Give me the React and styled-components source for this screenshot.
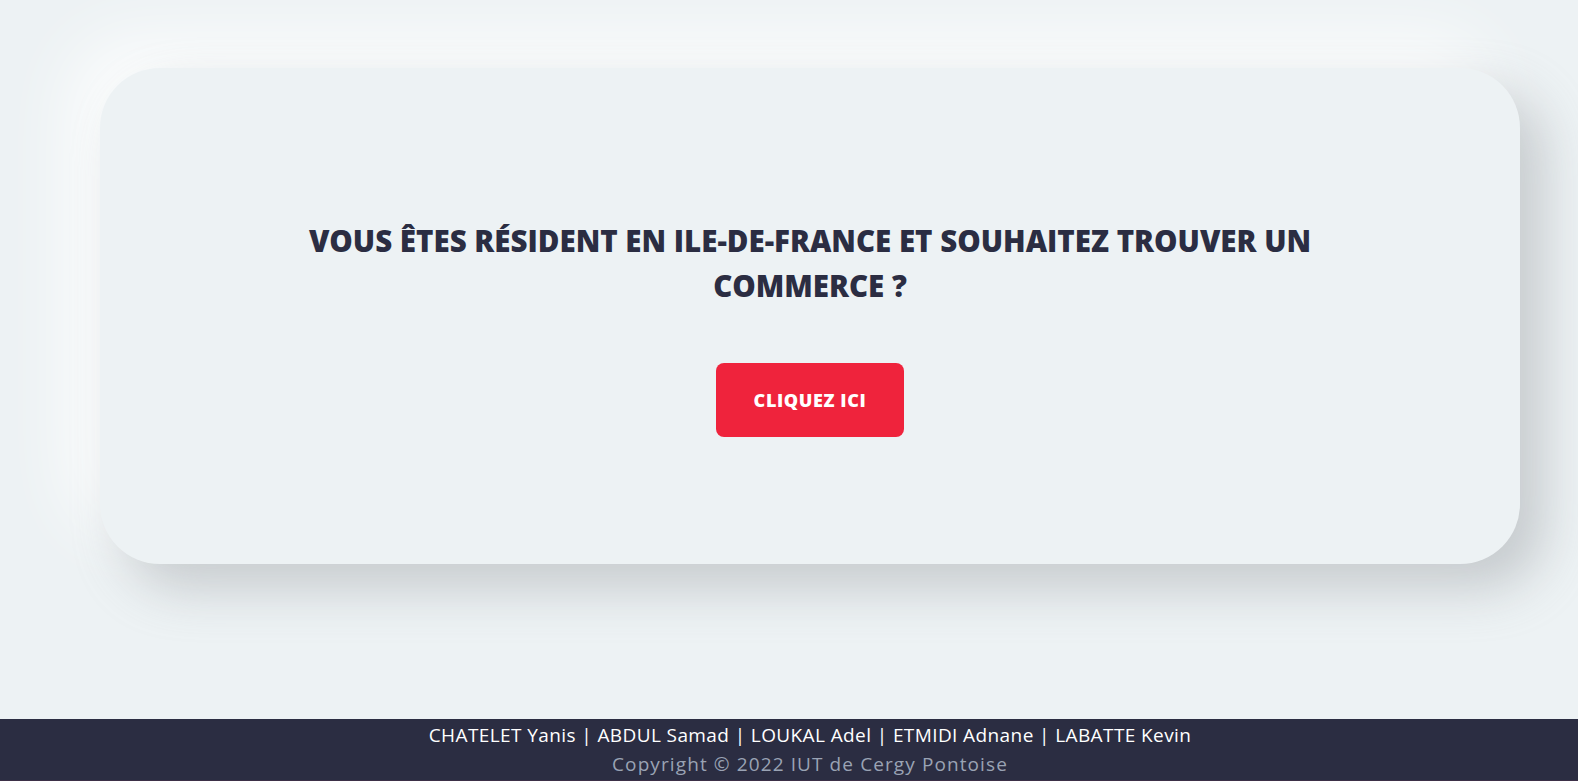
import styled, { createGlobalStyle } from "styled-components"

const GlobalStyle = createGlobalStyle`
  * { box-sizing: border-box; }
  body {
    margin: 0;
    background: #edf2f4;
    font-family: "Open Sans", "Liberation Sans", sans-serif;
  }
`

const Page = styled.div`
  min-height: 100vh;
  display: flex;
  flex-direction: column;
  overflow: hidden;
`

const Main = styled.main`
  flex: 1;
  padding: 68px 0 0 100px;
`

const Card = styled.section`
  width: 1420px;
  height: 496px;
  background: #edf2f4;
  border-radius: 60px;
  box-shadow: 24px 24px 50px rgba(150, 155, 160, 0.45), -30px -30px 70px rgba(255, 255, 255, 0.85);
  display: flex;
  flex-direction: column;
  align-items: center;
  padding-top: 150px;
`

const Title = styled.h1`
  margin: 0;
  width: 1040px;
  text-align: center;
  font-size: 29.5px;
  line-height: 45px;
  font-weight: 800;
  color: #2b2d42;
`

const Button = styled.button`
  margin-top: 55px;
  width: 188px;
  height: 74px;
  border: none;
  border-radius: 8px;
  background: #ef233c;
  color: #fff;
  font-family: inherit;
  font-size: 18px;
  letter-spacing: 0.6px;
  font-weight: 800;
  cursor: pointer;
`

const Footer = styled.footer`
  height: 62px;
  padding-left: 42px;
  background: #2b2d42;
  border-bottom: 1px solid #3d3048;
  display: flex;
  flex-direction: column;
  align-items: center;
  justify-content: center;
  font-size: 19px;
  line-height: 29px;
`

const Names = styled.div`
  color: #fff;
  letter-spacing: 0.4px;
`

const Copy = styled.div`
  color: #9aa3b4;
  letter-spacing: 1.1px;
`

export default function App() {
  return (
    <Page>
      <GlobalStyle />
      <Main>
        <Card>
          <Title>VOUS ÊTES RÉSIDENT EN ILE-DE-FRANCE ET SOUHAITEZ TROUVER UN COMMERCE ?</Title>
          <Button>CLIQUEZ ICI</Button>
        </Card>
      </Main>
      <Footer>
        <Names>CHATELET Yanis | ABDUL Samad | LOUKAL Adel | ETMIDI Adnane | LABATTE Kevin</Names>
        <Copy>Copyright © 2022 IUT de Cergy Pontoise</Copy>
      </Footer>
    </Page>
  )
}
